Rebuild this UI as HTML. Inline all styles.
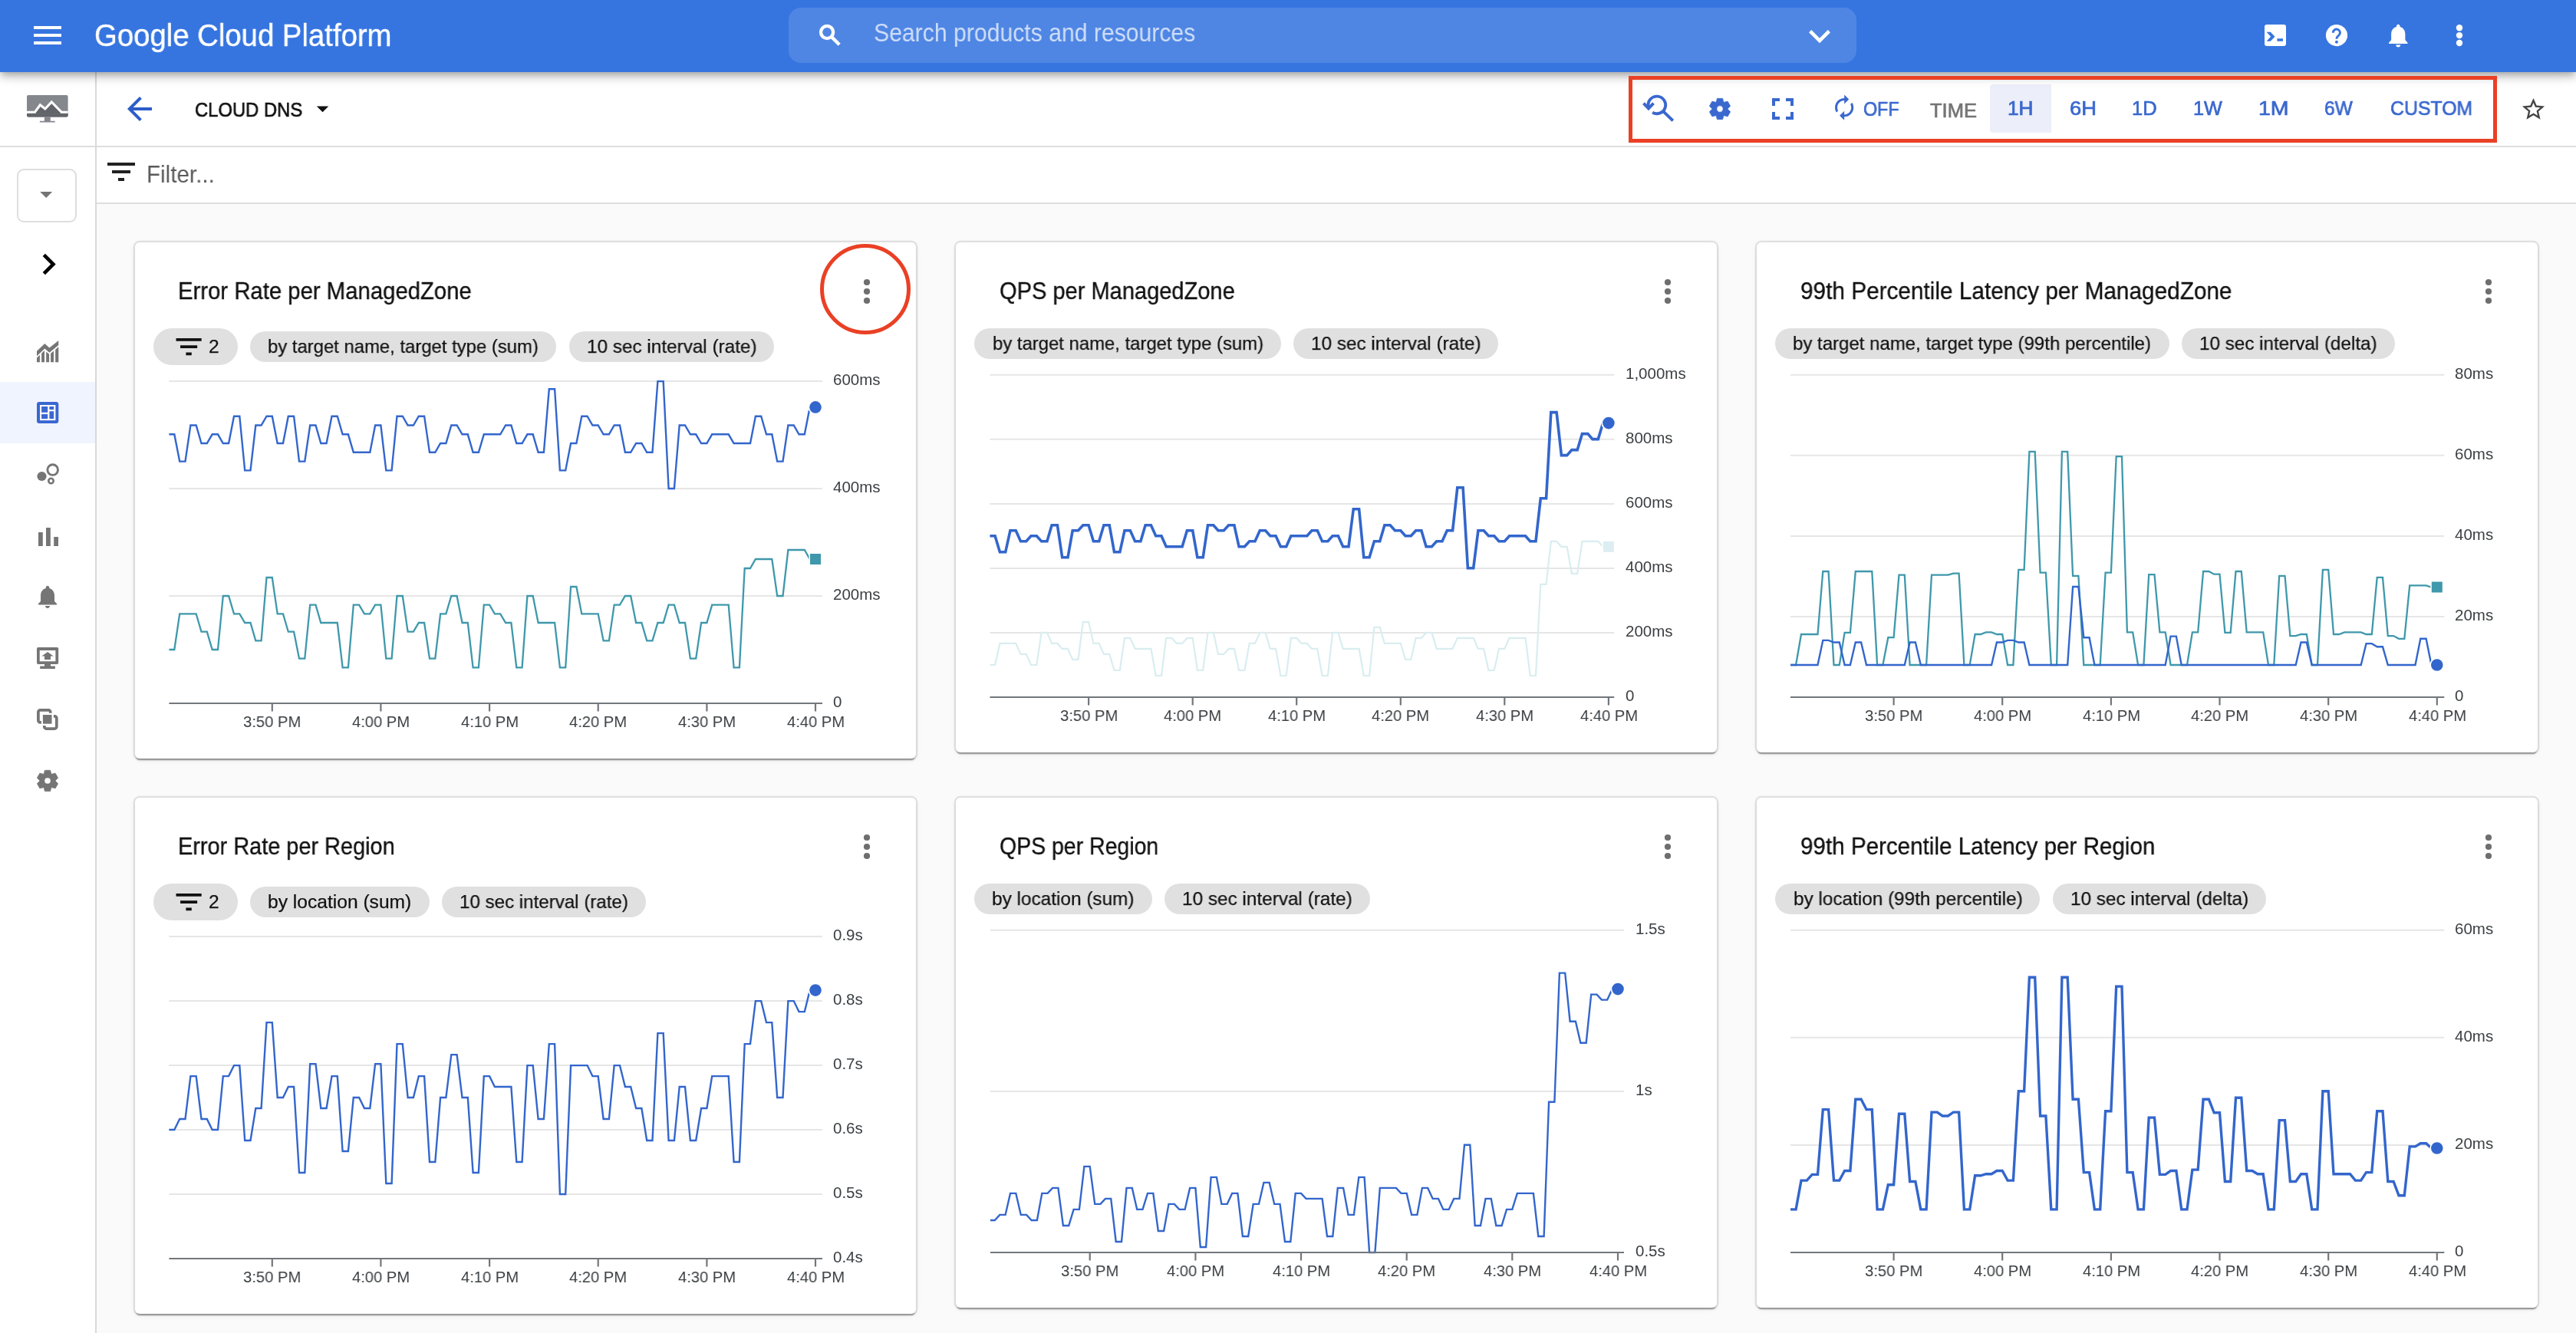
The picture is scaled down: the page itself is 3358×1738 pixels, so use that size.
<!DOCTYPE html>
<html><head><meta charset="utf-8"><title>Cloud DNS – Monitoring</title>
<style>
html,body{margin:0;padding:0}
body{width:3358px;height:1738px;overflow:hidden;background:#fafafa;font-family:"Liberation Sans",sans-serif;position:relative}
.t{position:absolute;white-space:nowrap;display:block;transform-origin:0 50%;will-change:transform}
.i{position:absolute;display:block;overflow:visible}
.b{position:absolute;box-sizing:border-box}
.card{position:absolute;background:#fff;border-radius:6px;box-shadow:0 0 0 2.3px rgba(0,0,0,.095),0 4px 2px -2px rgba(0,0,0,.22),0 3.5px 2px -1.5px rgba(0,0,0,.16),0 2px 7px 0 rgba(0,0,0,.07)}
.chip{position:absolute;background:#e0e0e0;border-radius:24px}
</style></head><body>

<div class="b" style="left:0;top:94px;width:126px;height:1644px;background:#fff"></div>
<div class="b" style="left:126px;top:94px;width:3232px;height:172px;background:#fff"></div>
<div class="b" style="left:0;top:190px;width:3358px;height:2px;background:#dedede"></div>
<div class="b" style="left:126px;top:264px;width:3232px;height:2px;background:#dedede"></div>
<div class="b" style="left:124.2px;top:94px;width:1.900px;height:1644px;background:#d9d9d9"></div>
<div class="b" style="left:0;top:0;width:3358px;height:94px;background:#3675e0;box-shadow:0 4px 8px -2px rgba(0,0,0,.2),0 8px 10px 0 rgba(0,0,0,.14),0 2px 20px 0 rgba(0,0,0,.12);z-index:5"></div>
<div style="position:absolute;left:0;top:0;width:3358px;height:94px;z-index:6">
<svg class="i" style="left:38.0px;top:22.0px" width="48" height="48" viewBox="0 0 24 24"><path d="M3 18h18v-2H3v2zm0-5h18v-2H3v2zm0-7v2h18V6H3z" fill="#fff" /></svg>
<span class="t" style="left:123.33px;top:21.6px;font-size:41.0px;line-height:49px;color:#fff;-webkit-text-stroke:0.4px #fff;transform:scaleX(0.9343);">Google Cloud Platform</span>
<div class="b" style="left:1028px;top:9.5px;width:1392px;height:72px;border-radius:16px;background:rgba(255,255,255,.125)"></div>
<svg class="i" style="left:1060px;top:24px" width="44" height="44" viewBox="1060 24 44 44"><circle cx="1078.1" cy="42" r="8.05" fill="none" stroke="#fff" stroke-width="4.3"/><path d="M1083.6 47.600L1094.2 58.200" stroke="#fff" stroke-width="4.400"/></svg>
<span class="t" style="left:1139.23px;top:23.4px;font-size:32.8px;line-height:39px;color:rgba(255,255,255,.72);transform:scaleX(0.9200);">Search products and resources</span>
<svg class="i" style="left:2344.0px;top:19.0px" width="56" height="56" viewBox="0 0 24 24"><path d="M7.41 8.59L12 13.17l4.59-4.58L18 10l-6 6-6-6 1.41-1.41z" fill="#fff" /></svg>
<svg class="i" style="left:2952px;top:32px" width="28" height="28" viewBox="0 0 28 28"><path fill="#fff" fill-rule="evenodd" d="M3 0h22a3 3 0 0 1 3 3v22a3 3 0 0 1-3 3H3a3 3 0 0 1-3-3V3a3 3 0 0 1 3-3zM2.6 9.7h5.2l5.7 6.1-5.7 6.0H2.6l5.5-6.0zM16.4 18.3h7.6v3.4h-7.6z"/></svg>
<svg class="i" style="left:3026px;top:26px" width="40" height="40" viewBox="3026 26 40 40"><circle cx="3046" cy="46.1" r="14.1" fill="#fff"/><path d="M3041.4 42.700a4.500 4.500 0 1 1 7.300 3.400c-1.600 1.300-2.800 2.300-2.800 4.700" fill="none" stroke="#3675e0" stroke-width="3"/><circle cx="3045.9" cy="54.800" r="1.950" fill="#3675e0"/></svg>
<svg class="i" style="left:3107.7px;top:28.0px" width="36.5" height="36.5" viewBox="0 0 24 24"><path d="M12 22c1.1 0 2-.9 2-2h-4c0 1.1.89 2 2 2zm6-6v-5c0-3.07-1.64-5.64-4.5-6.32V4c0-.83-.67-1.5-1.5-1.5s-1.5.67-1.5 1.5v.68C7.63 5.36 6 7.92 6 11v5l-2 2v1h16v-1l-2-2z" fill="#fff" /></svg>
<svg class="i" style="left:3200px;top:30px" width="12" height="32" viewBox="0 0 12 32"><circle cx="6" cy="6.2" r="4.2" fill="#fff"/><circle cx="6" cy="16.1" r="4.2" fill="#fff"/><circle cx="6" cy="26" r="4.2" fill="#fff"/></svg>
</div>
<svg class="i" style="left:158.3px;top:118.0px" width="48" height="48" viewBox="0 0 24 24"><path d="M20 11H7.83l5.59-5.59L12 4l-8 8 8 8 1.41-1.41L7.83 13H20v-2z" fill="#2b5dc9" /></svg>
<span class="t" style="left:253.61px;top:127.8px;font-size:25.42px;line-height:31px;color:#111;-webkit-text-stroke:0.7px #111;transform:scaleX(0.9368);">CLOUD DNS</span>
<svg class="i" style="left:401.5px;top:122.7px" width="37.2" height="37.2" viewBox="0 0 24 24"><path d="M7 10l5 5 5-5z" fill="#111" /></svg>
<div class="b" style="left:2123px;top:99px;width:1132px;height:86.5px;border:5px solid #ea4025;z-index:8"></div>
<div class="b" style="left:2594px;top:109.8px;width:80px;height:63.7px;background:#eceef9;border-radius:4px 0 0 4px"></div>
<svg class="i" style="left:2136px;top:118px" width="52" height="48" viewBox="2136 118 52 48">
<path d="M2148.8 139.2A11.3 11.3 0 1 1 2154.1 146.600" fill="none" stroke="#3a68ce" stroke-width="3.900"/>
<path d="M2167.6 144.600L2180.8 157.400" stroke="#3a68ce" stroke-width="4" fill="none"/>
<path d="M2142.5 134.600L2149 141.400L2155.5 134.600" stroke="#3a68ce" stroke-width="3.900" fill="none" stroke-linejoin="miter"/>
</svg>
<svg class="i" style="left:2222px;top:122px" width="40" height="40" viewBox="2222 122 40 40"><path d="M2246.91 132.95 L2245.56 128.25 L2238.44 128.25 L2237.09 132.95 L2236.62 133.22 L2231.87 132.05 L2228.32 138.21 L2231.70 141.73 L2231.70 142.27 L2228.32 145.79 L2231.87 151.95 L2236.62 150.78 L2237.09 151.05 L2238.44 155.75 L2245.56 155.75 L2246.91 151.05 L2247.38 150.78 L2252.13 151.95 L2255.68 145.79 L2252.30 142.27 L2252.30 141.73 L2255.68 138.21 L2252.13 132.05 L2247.38 133.22Z M2237.90 142.00a4.1 4.1 0 1 0 8.2 0a4.1 4.1 0 1 0 -8.2 0Z" fill="#3a68ce" fill-rule="evenodd" stroke="#3a68ce" stroke-width="0.6" stroke-linejoin="round"/></svg>
<svg class="i" style="left:2300.0px;top:117.9px" width="48" height="48" viewBox="0 0 24 24"><path d="M7 14H5v5h5v-2H7v-3zm-2-4h2V7h3V5H5v5zm12 7h-3v2h5v-5h-2v3zM14 5v2h3v3h2V5h-5z" fill="#3a68ce" /></svg>
<svg class="i" style="left:2385.8px;top:121.9px" width="36.3" height="36.3" viewBox="0 0 24 24"><path d="M12 6v3l4-4-4-4v3c-4.42 0-8 3.58-8 8 0 1.57.46 3.03 1.24 4.26L6.7 14.8c-.45-.83-.7-1.79-.7-2.8 0-3.31 2.69-6 6-6zm6.76 1.74L17.3 9.2c.44.84.7 1.79.7 2.8 0 3.31-2.69 6-6 6v-3l-4 4 4 4v-3c4.42 0 8-3.58 8-8 0-1.57-.46-3.03-1.24-4.26z" fill="#3a68ce" /></svg>
<span class="t" style="left:2429.25px;top:126.6px;font-size:25.21px;line-height:30px;color:#3a68ce;-webkit-text-stroke:0.7px #3a68ce;transform:scaleX(0.9259);">OFF</span>
<span class="t" style="left:2516.49px;top:129.4px;font-size:25.21px;line-height:30px;color:#757575;-webkit-text-stroke:0.7px #757575;transform:scaleX(1.0134);">TIME</span>
<span class="t" style="left:2617.23px;top:125.9px;font-size:25.21px;line-height:30px;color:#3a68ce;-webkit-text-stroke:0.7px #3a68ce;transform:scaleX(1.0413);">1H</span>
<span class="t" style="left:2697.83px;top:125.9px;font-size:25.21px;line-height:30px;color:#3a68ce;-webkit-text-stroke:0.7px #3a68ce;transform:scaleX(1.0843);">6H</span>
<span class="t" style="left:2778.78px;top:125.9px;font-size:25.21px;line-height:30px;color:#3a68ce;-webkit-text-stroke:0.7px #3a68ce;transform:scaleX(1.0131);">1D</span>
<span class="t" style="left:2858.73px;top:125.9px;font-size:25.21px;line-height:30px;color:#3a68ce;-webkit-text-stroke:0.7px #3a68ce;transform:scaleX(0.9889);">1W</span>
<span class="t" style="left:2944.36px;top:125.9px;font-size:25.21px;line-height:30px;color:#3a68ce;-webkit-text-stroke:0.7px #3a68ce;transform:scaleX(1.1320);">1M</span>
<span class="t" style="left:3030.28px;top:125.9px;font-size:25.21px;line-height:30px;color:#3a68ce;-webkit-text-stroke:0.7px #3a68ce;transform:scaleX(0.9718);">6W</span>
<span class="t" style="left:3115.56px;top:125.9px;font-size:25.21px;line-height:30px;color:#3a68ce;-webkit-text-stroke:0.7px #3a68ce;transform:scaleX(0.9850);">CUSTOM</span>
<svg class="i" style="left:3284.5px;top:125.3px" width="35" height="35" viewBox="0 0 24 24"><path d="M22 9.24l-7.19-.62L12 2 9.19 8.63 2 9.24l5.46 4.73L5.82 21 12 17.27 18.18 21l-1.63-7.03L22 9.24zM12 15.4l-3.76 2.27 1-4.28-3.32-2.88 4.38-.38L12 6.1l1.71 4.04 4.38.38-3.32 2.88 1 4.28L12 15.4z" fill="#444" /></svg>
<svg class="i" style="left:133.8px;top:200.0px" width="48" height="48" viewBox="0 0 24 24"><path d="M10 18h4v-2h-4v2zM3 6v2h18V6H3zm3 7h12v-2H6v2z" fill="#222" /></svg>
<span class="t" style="left:190.61px;top:209.2px;font-size:30.75px;line-height:37px;color:#5a5a5a;transform:scaleX(0.9618);">Filter...</span>
<svg class="i" style="left:35.2px;top:123.900px" width="53.600" height="36" viewBox="0 0 54 38" preserveAspectRatio="none">
<path d="M2 0h50a2 2 0 0 1 2 2v26a2 2 0 0 1-2 2H2a2 2 0 0 1-2-2V2a2 2 0 0 1 2-2z" fill="#84878c"/>
<path d="M0 26h54v2a2 2 0 0 1-2 2H2a2 2 0 0 1-2-2z" fill="#61656a"/>
<path d="M0 24h10l7.5-10.5 6.5 5.5 8.5-9 13 14h8.5v2H0z" fill="#61656a"/>
<path d="M0 23.500h10.500l7-10 6.500 5.500 8.500-9.500 13 14H54" stroke="#fff" stroke-width="3.2" fill="none"/>
<path d="M23 30h8v5.5h6V37.5H17V35.5h6z" fill="#84878c"/>
</svg>
<div class="b" style="left:22px;top:220px;width:77.5px;height:69.500px;border:2px solid #dedede;border-radius:9px;background:#fff"></div>
<svg class="i" style="left:40.8px;top:234.0px" width="38.4" height="38.4" viewBox="0 0 24 24"><path d="M7 10l5 5 5-5z" fill="#757575" /></svg>
<svg class="i" style="left:36.3px;top:316.6px" width="55" height="55" viewBox="0 0 24 24"><path d="M10 6L8.59 7.41 13.17 12l-4.58 4.59L10 18l6-6z" fill="#000" /></svg>
<div class="b" style="left:0;top:498px;width:124.2px;height:80px;background:#f0f4fe"></div>
<svg class="i" style="left:47.9px;top:443.900px" width="28.3" height="28.3" viewBox="0 0 28.3 28.3">
<path d="M0 13.8L10.3 4.1 16.4 9.5 28.3 0V6L16.4 15.8 10.3 10.4 0 20.2Z" fill="#757575"/>
<path d="M0 28.2V22.5L3.9 18.8V28.2ZM6.1 28.2V16.7L10 13.0V28.2ZM12.2 28.2V14.4L16.1 17.8V28.2ZM18.1 28.2V16.7L22 13.5V28.2ZM24.2 28.2V11.7L28.3 8.3V28.2Z" fill="#757575"/>
</svg>
<svg class="i" style="left:47.9px;top:523.900px" width="28.3" height="28" viewBox="0 0 28.3 28">
<rect x="0" y="0" width="28.3" height="28" rx="3.2" fill="#3a67d1"/>
<rect x="4" y="4" width="20.4" height="20.1" fill="#fff"/>
<path d="M6.1 6h8.1v7.800H6.100zM6.100 16.100h8.100v6H6.100zM16.400 6h5.800v3.900h-5.800zM16.400 12.200h5.800v9.900h-5.800z" fill="#3a67d1"/>
</svg>
<svg class="i" style="left:48px;top:604px" width="30" height="28" viewBox="0 0 30 28">
<circle cx="6.5" cy="17" r="6.1" fill="#757575"/>
<circle cx="20.7" cy="8.600" r="6.800" fill="none" stroke="#757575" stroke-width="2.900"/>
<circle cx="18.5" cy="23" r="3.2" fill="none" stroke="#757575" stroke-width="2.600"/>
</svg>
<svg class="i" style="left:50px;top:688px" width="26" height="24" viewBox="0 0 26 24">
<path d="M0 6h5.8v18H0zM10 0h5.8v24H10zM20.2 12H26v12h-5.8z" fill="#757575"/></svg>
<svg class="i" style="left:44.1px;top:760.2px" width="36" height="36" viewBox="0 0 24 24"><path d="M12 22c1.1 0 2-.9 2-2h-4c0 1.1.89 2 2 2zm6-6v-5c0-3.07-1.64-5.64-4.5-6.32V4c0-.83-.67-1.5-1.5-1.5s-1.5.67-1.5 1.5v.68C7.63 5.36 6 7.92 6 11v5l-2 2v1h16v-1l-2-2z" fill="#757575" /></svg>
<svg class="i" style="left:48px;top:843.900px" width="28.2" height="28" viewBox="0 0 28.2 28">
<path fill-rule="evenodd" d="M1.800 0h24.600a1.800 1.800 0 0 1 1.800 1.800v18.400a1.800 1.800 0 0 1-1.800 1.800H18v2.400h5.900V28H4.200v-3.600H10V22H1.800a1.800 1.800 0 0 1-1.800-1.800V1.800A1.800 1.800 0 0 1 1.800 0zM3.750 4v14.300h20.650V4zM14.100 6.100l7.700 5.400H18v4.400h-8v-4.400H6.300z" fill="#757575"/></svg>
<svg class="i" style="left:48.3px;top:924.100px" width="28" height="28" viewBox="0 0 28 28">
<path d="M17.700 5.700V4.400a2.5 2.5 0 0 0-2.5-2.500H4.400a2.500 2.500 0 0 0-2.500 2.500v10.900a2.500 2.500 0 0 0 2.500 2.500h1.500M21.900 9.900h1.400a2.500 2.500 0 0 1 2.500 2.500V23.500a2.500 2.500 0 0 1-2.500 2.500H12.300a2.500 2.500 0 0 1-2.500-2.500v-1.500" fill="none" stroke="#757575" stroke-width="3.750"/>
<rect x="7.900" y="8" width="11.600" height="11.700" fill="#757575"/></svg>
<svg class="i" style="left:42px;top:998px" width="40" height="40" viewBox="42 998 40 40"><path d="M66.91 1008.95 L65.56 1004.25 L58.44 1004.25 L57.09 1008.95 L56.62 1009.22 L51.87 1008.05 L48.32 1014.21 L51.70 1017.73 L51.70 1018.27 L48.32 1021.79 L51.87 1027.95 L56.62 1026.78 L57.09 1027.05 L58.44 1031.75 L65.56 1031.75 L66.91 1027.05 L67.38 1026.78 L72.13 1027.95 L75.68 1021.79 L72.30 1018.27 L72.30 1017.73 L75.68 1014.21 L72.13 1008.05 L67.38 1009.22Z M57.90 1018.00a4.1 4.1 0 1 0 8.2 0a4.1 4.1 0 1 0 -8.2 0Z" fill="#757575" fill-rule="evenodd" stroke="#757575" stroke-width="0.6" stroke-linejoin="round"/></svg>
<div class="card" style="left:176px;top:316px;width:1018px;height:673px"></div>
<span class="t" style="left:231.74px;top:360.8px;font-size:30.75px;line-height:37px;color:#111;-webkit-text-stroke:0.35px #111;transform:scaleX(0.9530);">Error Rate per ManagedZone</span>
<svg class="i" style="left:1124.0px;top:364.0px" width="12" height="32" viewBox="0 0 12 32"><circle cx="6" cy="4" r="4.100" fill="#6e6e6e"/><circle cx="6" cy="16" r="4.100" fill="#6e6e6e"/><circle cx="6" cy="28" r="4.100" fill="#6e6e6e"/></svg>
<div class="chip" style="left:200px;top:428px;width:110px;height:48px"></div>
<svg class="i" style="left:223.7px;top:429.9px" width="44.2" height="44.2" viewBox="0 0 24 24"><path d="M10 18h4v-2h-4v2zM3 6v2h18V6H3zm3 7h12v-2H6v2z" fill="#111" /></svg>
<span class="t" style="left:271.77px;top:437.3px;font-size:24.6px;line-height:30px;color:#111;-webkit-text-stroke:0.25px #111;">2</span>
<div class="chip" style="left:326.0px;top:432.0px;width:399.4px;height:40.0px"></div>
<span class="t" style="left:349.35px;top:436.8px;font-size:24.6px;line-height:30px;color:#111;-webkit-text-stroke:0.25px #111;transform:scaleX(0.9703);">by target name, target type (sum)</span>
<div class="chip" style="left:741.7px;top:432.0px;width:267.8px;height:40.0px"></div>
<span class="t" style="left:764.78px;top:436.8px;font-size:24.6px;line-height:30px;color:#111;-webkit-text-stroke:0.25px #111;transform:scaleX(0.9883);">10 sec interval (rate)</span>
<svg class="i" style="left:0;top:0" width="3358" height="1738" viewBox="0 0 3358 1738">
<defs><clipPath id="cp1"><rect x="220.4" y="491.1" width="881.6" height="429.9"/></clipPath></defs>
<path d="M220.4 497.1H1072" stroke="#e6e6e6" stroke-width="2"/>
<path d="M220.4 637H1072" stroke="#e6e6e6" stroke-width="2"/>
<path d="M220.4 777H1072" stroke="#e6e6e6" stroke-width="2"/>
<polyline clip-path="url(#cp1)" points="220.0,566.3 227.3,566.3 234.2,601.6 241.5,601.6 248.4,554.5 255.7,554.5 262.5,578.0 269.8,578.0 276.7,566.3 284.0,566.3 290.8,578.0 298.1,578.0 305.0,542.7 312.3,542.7 319.2,613.4 326.5,613.4 333.3,554.5 340.6,554.5 347.5,542.7 354.8,542.7 361.7,578.0 369.0,578.0 375.8,542.7 383.1,542.7 390.0,601.6 397.3,601.6 404.2,554.5 411.5,554.5 418.3,578.0 425.6,578.0 432.5,542.7 439.8,542.7 446.6,566.3 453.9,566.3 460.8,589.8 468.1,589.8 475.0,589.8 482.3,589.8 489.1,554.5 496.4,554.5 503.3,613.4 510.6,613.4 517.5,542.7 524.8,542.7 531.6,554.5 538.9,554.5 545.8,542.7 553.1,542.7 560.0,589.8 567.3,589.8 574.1,578.0 581.4,578.0 588.3,554.5 595.6,554.5 602.5,566.3 609.8,566.3 616.6,589.8 623.9,589.8 630.8,566.3 638.1,566.3 644.9,566.3 652.2,566.3 659.1,554.5 666.4,554.5 673.3,578.0 680.6,578.0 687.4,566.3 694.7,566.3 701.6,589.8 708.9,589.8 715.8,507.3 723.1,507.3 729.9,613.4 737.2,613.4 744.1,578.0 751.4,578.0 758.3,542.7 765.6,542.7 772.4,554.5 779.7,554.5 786.6,566.3 793.9,566.3 800.7,554.5 808.0,554.5 814.9,589.8 822.2,589.8 829.1,578.0 836.4,578.0 843.2,589.8 850.5,589.8 857.4,497.1 864.7,497.1 871.6,637.0 878.9,637.0 885.7,554.5 893.0,554.5 899.9,566.3 907.2,566.3 914.1,578.0 921.4,578.0 928.2,566.3 935.5,566.3 942.4,566.3 949.7,566.3 956.6,578.0 963.9,578.0 970.7,578.0 978.0,578.0 984.9,542.7 992.2,542.7 999.0,566.3 1006.3,566.3 1013.2,601.6 1020.5,601.6 1027.4,554.5 1034.7,554.5 1041.5,566.3 1048.8,566.3 1055.7,530.9 1063.0,530.9" fill="none" stroke="#3366cc" stroke-width="2.4" stroke-linejoin="miter"/>
<polyline clip-path="url(#cp1)" points="220.0,847.0 227.3,847.0 234.2,800.4 241.5,800.4 248.4,800.4 255.7,800.4 262.5,823.7 269.8,823.7 276.7,847.0 284.0,847.0 290.8,777.0 298.1,777.0 305.0,800.4 312.3,800.4 319.2,812.0 326.5,812.0 333.3,835.4 340.6,835.4 347.5,753.0 354.8,753.0 361.7,800.4 369.0,800.4 375.8,823.7 383.1,823.7 390.0,858.7 397.3,858.7 404.2,788.7 411.5,788.7 418.3,812.0 425.6,812.0 432.5,812.0 439.8,812.0 446.6,870.3 453.9,870.3 460.8,788.7 468.1,788.7 475.0,800.4 482.3,800.4 489.1,788.7 496.4,788.7 503.3,858.7 510.6,858.7 517.5,777.0 524.8,777.0 531.6,823.7 538.9,823.7 545.8,812.0 553.1,812.0 560.0,858.7 567.3,858.7 574.1,800.4 581.4,800.4 588.3,777.0 595.6,777.0 602.5,812.0 609.8,812.0 616.6,870.3 623.9,870.3 630.8,788.7 638.1,788.7 644.9,800.4 652.2,800.4 659.1,812.0 666.4,812.0 673.3,870.3 680.6,870.3 687.4,777.0 694.7,777.0 701.6,812.0 708.9,812.0 715.8,812.0 723.1,812.0 729.9,870.3 737.2,870.3 744.1,765.0 751.4,765.0 758.3,800.4 765.6,800.4 772.4,800.4 779.7,800.4 786.6,835.4 793.9,835.4 800.7,788.7 808.0,788.7 814.9,777.0 822.2,777.0 829.1,812.0 836.4,812.0 843.2,835.4 850.5,835.4 857.4,812.0 864.7,812.0 871.6,788.7 878.9,788.7 885.7,812.0 893.0,812.0 899.9,858.7 907.2,858.7 914.1,812.0 921.4,812.0 928.2,788.7 935.5,788.7 942.4,788.7 949.7,788.7 956.6,870.3 963.9,870.3 970.7,741.0 978.0,741.0 984.9,729.0 992.2,729.0 999.0,729.0 1006.3,729.0 1013.2,777.0 1020.5,777.0 1027.4,717.0 1034.7,717.0 1041.5,717.0 1048.8,717.0 1055.7,729.0 1063.0,729.0" fill="none" stroke="#3f98ab" stroke-width="2.3" stroke-linejoin="miter"/>
<circle cx="1063" cy="530.9" r="9.5" fill="#fff"/><circle cx="1063" cy="530.9" r="7.800" fill="#3366cc"/>
<rect x="1054.5" y="720.5" width="17" height="17" fill="#fff"/><rect x="1056" y="722.0" width="14" height="14" fill="#3f98ab"/>
<path d="M220.4 917H1072" stroke="#72777c" stroke-width="2.2"/>
<path d="M354.8 917v10.5" stroke="#72777c" stroke-width="2.2"/>
<path d="M496.4 917v10.5" stroke="#72777c" stroke-width="2.2"/>
<path d="M638.1 917v10.5" stroke="#72777c" stroke-width="2.2"/>
<path d="M779.7 917v10.5" stroke="#72777c" stroke-width="2.2"/>
<path d="M921.4 917v10.5" stroke="#72777c" stroke-width="2.2"/>
<path d="M1063.0 917v10.5" stroke="#72777c" stroke-width="2.2"/>
</svg>
<span class="t" style="left:317.24px;top:928.4px;font-size:20.5px;line-height:25px;color:#3c4043;transform:scaleX(0.9874);">3:50 PM</span>
<span class="t" style="left:459.14px;top:928.4px;font-size:20.5px;line-height:25px;color:#3c4043;transform:scaleX(0.9840);">4:00 PM</span>
<span class="t" style="left:600.78px;top:928.4px;font-size:20.5px;line-height:25px;color:#3c4043;transform:scaleX(0.9840);">4:10 PM</span>
<span class="t" style="left:742.42px;top:928.4px;font-size:20.5px;line-height:25px;color:#3c4043;transform:scaleX(0.9840);">4:20 PM</span>
<span class="t" style="left:884.06px;top:928.4px;font-size:20.5px;line-height:25px;color:#3c4043;transform:scaleX(0.9840);">4:30 PM</span>
<span class="t" style="left:1025.70px;top:928.4px;font-size:20.5px;line-height:25px;color:#3c4043;transform:scaleX(0.9840);">4:40 PM</span>
<span class="t" style="left:1085.60px;top:482.4px;font-size:20.5px;line-height:25px;color:#3c4043;">600ms</span>
<span class="t" style="left:1085.60px;top:622.3px;font-size:20.5px;line-height:25px;color:#3c4043;">400ms</span>
<span class="t" style="left:1085.60px;top:762.3px;font-size:20.5px;line-height:25px;color:#3c4043;">200ms</span>
<span class="t" style="left:1085.60px;top:902.3px;font-size:20.5px;line-height:25px;color:#3c4043;">0</span>
<div class="b" style="left:1068.8px;top:317.800px;width:118.3px;height:118.3px;border:5.5px solid #ea4025;border-radius:50%"></div>
<div class="card" style="left:1246px;top:316px;width:992px;height:665px"></div>
<span class="t" style="left:1302.69px;top:360.8px;font-size:30.75px;line-height:37px;color:#111;-webkit-text-stroke:0.35px #111;transform:scaleX(0.9444);">QPS per ManagedZone</span>
<svg class="i" style="left:2167.5px;top:364.0px" width="12" height="32" viewBox="0 0 12 32"><circle cx="6" cy="4" r="4.100" fill="#6e6e6e"/><circle cx="6" cy="16" r="4.100" fill="#6e6e6e"/><circle cx="6" cy="28" r="4.100" fill="#6e6e6e"/></svg>
<div class="chip" style="left:1270.4px;top:427.6px;width:399.6px;height:40.4px"></div>
<span class="t" style="left:1293.75px;top:432.8px;font-size:24.6px;line-height:30px;color:#111;-webkit-text-stroke:0.25px #111;transform:scaleX(0.9708);">by target name, target type (sum)</span>
<div class="chip" style="left:1685.7px;top:427.6px;width:267.8px;height:40.4px"></div>
<span class="t" style="left:1708.78px;top:432.8px;font-size:24.6px;line-height:30px;color:#111;-webkit-text-stroke:0.25px #111;transform:scaleX(0.9883);">10 sec interval (rate)</span>
<svg class="i" style="left:0;top:0" width="3358" height="1738" viewBox="0 0 3358 1738">
<defs><clipPath id="cp2"><rect x="1290.4" y="482.8" width="843.7999999999997" height="430.2"/></clipPath></defs>
<path d="M1290.4 488.8H2104.2" stroke="#e6e6e6" stroke-width="2"/>
<path d="M1290.4 572.84H2104.2" stroke="#e6e6e6" stroke-width="2"/>
<path d="M1290.4 656.88H2104.2" stroke="#e6e6e6" stroke-width="2"/>
<path d="M1290.4 740.92H2104.2" stroke="#e6e6e6" stroke-width="2"/>
<path d="M1290.4 824.96H2104.2" stroke="#e6e6e6" stroke-width="2"/>
<polyline clip-path="url(#cp2)" points="1289.8,867.0 1297.1,867.0 1303.4,838.9 1310.7,838.9 1316.9,838.9 1324.2,838.9 1330.5,852.9 1337.8,852.9 1344.0,867.0 1351.3,867.0 1357.6,824.9 1364.9,824.9 1371.1,838.9 1378.4,838.9 1384.7,845.9 1392.0,845.9 1398.2,859.9 1405.5,859.9 1411.8,810.9 1419.1,810.9 1425.4,838.9 1432.7,838.9 1438.9,852.9 1446.2,852.9 1452.5,874.0 1459.8,874.0 1466.0,831.9 1473.3,831.9 1479.6,845.9 1486.9,845.9 1493.1,845.9 1500.4,845.9 1506.7,881.0 1514.0,881.0 1520.2,831.9 1527.5,831.9 1533.8,838.9 1541.1,838.9 1547.4,831.9 1554.7,831.9 1560.9,874.0 1568.2,874.0 1574.5,824.9 1581.8,824.9 1588.0,852.9 1595.3,852.9 1601.6,845.9 1608.9,845.9 1615.1,874.0 1622.4,874.0 1628.7,838.9 1636.0,838.9 1642.3,824.9 1649.6,824.9 1655.8,845.9 1663.1,845.9 1669.4,881.0 1676.7,881.0 1682.9,831.9 1690.2,831.9 1696.5,838.9 1703.8,838.9 1710.0,845.9 1717.3,845.9 1723.6,881.0 1730.9,881.0 1737.1,824.9 1744.4,824.9 1750.7,845.9 1758.0,845.9 1764.3,845.9 1771.6,845.9 1777.8,881.0 1785.1,881.0 1791.4,817.9 1798.7,817.9 1804.9,838.9 1812.2,838.9 1818.5,838.9 1825.8,838.9 1832.0,859.9 1839.3,859.9 1845.6,831.9 1852.9,831.9 1859.1,824.9 1866.4,824.9 1872.7,845.9 1880.0,845.9 1886.3,845.9 1893.6,845.9 1899.8,831.9 1907.1,831.9 1913.4,831.9 1920.7,831.9 1926.9,845.9 1934.2,845.9 1940.5,874.0 1947.8,874.0 1954.0,845.9 1961.3,845.9 1967.6,831.9 1974.9,831.9 1981.2,831.9 1988.5,831.9 1994.7,881.0 2002.0,881.0 2008.3,761.8 2015.6,761.8 2021.8,705.8 2029.1,705.8 2035.4,712.8 2042.7,712.8 2048.9,747.8 2056.2,747.8 2062.5,705.8 2069.8,705.8 2076.0,705.8 2083.3,705.8 2089.6,712.8 2096.9,712.8" fill="none" stroke="#d9edf0" stroke-width="2.2" stroke-linejoin="miter"/>
<polyline clip-path="url(#cp2)" points="1289.8,698.8 1297.1,698.8 1303.4,719.8 1310.7,719.8 1316.9,691.8 1324.2,691.8 1330.5,705.8 1337.8,705.8 1344.0,698.8 1351.3,698.8 1357.6,705.8 1364.9,705.8 1371.1,684.7 1378.4,684.7 1384.7,726.8 1392.0,726.8 1398.2,691.8 1405.5,691.8 1411.8,684.7 1419.1,684.7 1425.4,705.8 1432.7,705.8 1438.9,684.7 1446.2,684.7 1452.5,719.8 1459.8,719.8 1466.0,691.8 1473.3,691.8 1479.6,705.8 1486.9,705.8 1493.1,684.7 1500.4,684.7 1506.7,698.8 1514.0,698.8 1520.2,712.8 1527.5,712.8 1533.8,712.8 1541.1,712.8 1547.4,691.8 1554.7,691.8 1560.9,726.8 1568.2,726.8 1574.5,684.7 1581.8,684.7 1588.0,691.8 1595.3,691.8 1601.6,684.7 1608.9,684.7 1615.1,712.8 1622.4,712.8 1628.7,705.8 1636.0,705.8 1642.3,691.8 1649.6,691.8 1655.8,698.8 1663.1,698.8 1669.4,712.8 1676.7,712.8 1682.9,698.8 1690.2,698.8 1696.5,698.8 1703.8,698.8 1710.0,691.8 1717.3,691.8 1723.6,705.8 1730.9,705.8 1737.1,698.8 1744.4,698.8 1750.7,712.8 1758.0,712.8 1764.3,663.7 1771.6,663.7 1777.8,726.8 1785.1,726.8 1791.4,705.8 1798.7,705.8 1804.9,684.7 1812.2,684.7 1818.5,691.8 1825.8,691.8 1832.0,698.8 1839.3,698.8 1845.6,691.8 1852.9,691.8 1859.1,712.8 1866.4,712.8 1872.7,705.8 1880.0,705.8 1886.3,691.8 1893.6,691.8 1899.8,635.7 1907.1,635.7 1913.4,740.8 1920.7,740.8 1926.9,691.8 1934.2,691.8 1940.5,698.8 1947.8,698.8 1954.0,705.8 1961.3,705.8 1967.6,698.8 1974.9,698.8 1981.2,698.8 1988.5,698.8 1994.7,705.8 2002.0,705.8 2008.3,649.7 2015.6,649.7 2021.8,537.6 2029.1,537.6 2035.4,593.6 2042.7,593.6 2048.9,586.6 2056.2,586.6 2062.5,565.6 2069.8,565.6 2076.0,572.6 2083.3,572.6 2089.6,551.6 2096.9,551.6" fill="none" stroke="#3366cc" stroke-width="3.6" stroke-linejoin="miter"/>
<rect x="2088.4" y="704.3" width="17" height="17" fill="#fff"/><rect x="2089.9" y="705.8" width="14" height="14" fill="#dceef1"/>
<circle cx="2096.9" cy="551.6" r="9.5" fill="#fff"/><circle cx="2096.9" cy="551.6" r="7.800" fill="#3366cc"/>
<path d="M1290.4 909H2104.2" stroke="#72777c" stroke-width="2.2"/>
<path d="M1419.1 909v10.5" stroke="#72777c" stroke-width="2.2"/>
<path d="M1554.7 909v10.5" stroke="#72777c" stroke-width="2.2"/>
<path d="M1690.2 909v10.5" stroke="#72777c" stroke-width="2.2"/>
<path d="M1825.8 909v10.5" stroke="#72777c" stroke-width="2.2"/>
<path d="M1961.3 909v10.5" stroke="#72777c" stroke-width="2.2"/>
<path d="M2096.9 909v10.5" stroke="#72777c" stroke-width="2.2"/>
</svg>
<span class="t" style="left:1381.54px;top:920.4px;font-size:20.5px;line-height:25px;color:#3c4043;transform:scaleX(0.9874);">3:50 PM</span>
<span class="t" style="left:1517.36px;top:920.4px;font-size:20.5px;line-height:25px;color:#3c4043;transform:scaleX(0.9840);">4:00 PM</span>
<span class="t" style="left:1652.92px;top:920.4px;font-size:20.5px;line-height:25px;color:#3c4043;transform:scaleX(0.9840);">4:10 PM</span>
<span class="t" style="left:1788.48px;top:920.4px;font-size:20.5px;line-height:25px;color:#3c4043;transform:scaleX(0.9840);">4:20 PM</span>
<span class="t" style="left:1924.04px;top:920.4px;font-size:20.5px;line-height:25px;color:#3c4043;transform:scaleX(0.9840);">4:30 PM</span>
<span class="t" style="left:2059.60px;top:920.4px;font-size:20.5px;line-height:25px;color:#3c4043;transform:scaleX(0.9840);">4:40 PM</span>
<span class="t" style="left:2119.00px;top:474.1px;font-size:20.5px;line-height:25px;color:#3c4043;">1,000ms</span>
<span class="t" style="left:2119.00px;top:558.1px;font-size:20.5px;line-height:25px;color:#3c4043;">800ms</span>
<span class="t" style="left:2119.00px;top:642.2px;font-size:20.5px;line-height:25px;color:#3c4043;">600ms</span>
<span class="t" style="left:2119.00px;top:726.2px;font-size:20.5px;line-height:25px;color:#3c4043;">400ms</span>
<span class="t" style="left:2119.00px;top:810.3px;font-size:20.5px;line-height:25px;color:#3c4043;">200ms</span>
<span class="t" style="left:2119.00px;top:894.3px;font-size:20.5px;line-height:25px;color:#3c4043;">0</span>
<div class="card" style="left:2290px;top:316px;width:1018px;height:665px"></div>
<span class="t" style="left:2347.16px;top:360.8px;font-size:30.75px;line-height:37px;color:#111;-webkit-text-stroke:0.35px #111;transform:scaleX(0.9678);">99th Percentile Latency per ManagedZone</span>
<svg class="i" style="left:3238.0px;top:364.0px" width="12" height="32" viewBox="0 0 12 32"><circle cx="6" cy="4" r="4.100" fill="#6e6e6e"/><circle cx="6" cy="16" r="4.100" fill="#6e6e6e"/><circle cx="6" cy="28" r="4.100" fill="#6e6e6e"/></svg>
<div class="chip" style="left:2314.0px;top:427.6px;width:513.6px;height:40.4px"></div>
<span class="t" style="left:2337.34px;top:432.8px;font-size:24.6px;line-height:30px;color:#111;-webkit-text-stroke:0.25px #111;transform:scaleX(0.9760);">by target name, target type (99th percentile)</span>
<div class="chip" style="left:2843.8px;top:427.6px;width:277.8px;height:40.4px"></div>
<span class="t" style="left:2866.88px;top:432.8px;font-size:24.6px;line-height:30px;color:#111;-webkit-text-stroke:0.25px #111;transform:scaleX(0.9848);">10 sec interval (delta)</span>
<svg class="i" style="left:0;top:0" width="3358" height="1738" viewBox="0 0 3358 1738">
<defs><clipPath id="cp3"><rect x="2334" y="482.8" width="882.3000000000002" height="430.2"/></clipPath></defs>
<path d="M2334 488.8H3186.3" stroke="#e6e6e6" stroke-width="2"/>
<path d="M2334 593.85H3186.3" stroke="#e6e6e6" stroke-width="2"/>
<path d="M2334 698.9H3186.3" stroke="#e6e6e6" stroke-width="2"/>
<path d="M2334 803.95H3186.3" stroke="#e6e6e6" stroke-width="2"/>
<polyline clip-path="url(#cp3)" points="2333.8,867.0 2341.1,867.0 2348.0,827.0 2355.3,827.0 2362.2,827.0 2369.5,827.0 2376.3,745.0 2383.6,745.0 2390.5,867.0 2397.8,867.0 2404.6,824.9 2411.9,824.9 2418.8,745.0 2426.1,745.0 2433.0,745.0 2440.3,745.0 2447.1,867.0 2454.4,867.0 2461.3,831.2 2468.6,831.2 2475.5,749.7 2482.8,749.7 2489.6,867.0 2496.9,867.0 2503.8,867.0 2511.1,867.0 2518.0,749.7 2525.3,749.7 2532.1,749.7 2539.4,749.7 2546.3,747.6 2553.6,747.6 2560.4,867.0 2567.7,867.0 2574.6,827.0 2581.9,827.0 2588.8,824.4 2596.1,824.4 2602.9,827.0 2610.2,827.0 2617.1,867.0 2624.4,867.0 2631.3,742.9 2638.6,742.9 2645.4,588.9 2652.7,588.9 2659.6,746.6 2666.9,746.6 2673.8,867.0 2681.1,867.0 2687.9,588.9 2695.2,588.9 2702.1,750.8 2709.4,750.8 2716.3,867.0 2723.6,867.0 2730.4,867.0 2737.7,867.0 2744.6,746.6 2751.9,746.6 2758.7,595.2 2766.0,595.2 2772.9,824.4 2780.2,824.4 2787.1,867.0 2794.4,867.0 2801.2,749.2 2808.5,749.2 2815.4,824.4 2822.7,824.4 2829.6,867.0 2836.9,867.0 2843.7,867.0 2851.0,867.0 2857.9,824.4 2865.2,824.4 2872.1,745.0 2879.4,745.0 2886.2,748.7 2893.5,748.7 2900.4,824.9 2907.7,824.9 2914.5,745.0 2921.8,745.0 2928.7,824.4 2936.0,824.4 2942.9,824.4 2950.2,824.4 2957.0,867.0 2964.3,867.0 2971.2,750.8 2978.5,750.8 2985.4,829.1 2992.7,829.1 2999.5,827.0 3006.8,827.0 3013.7,867.0 3021.0,867.0 3027.9,742.9 3035.2,742.9 3042.0,827.0 3049.3,827.0 3056.2,824.4 3063.5,824.4 3070.4,824.4 3077.7,824.4 3084.5,827.0 3091.8,827.0 3098.7,752.9 3106.0,752.9 3112.8,829.1 3120.1,829.1 3127.0,832.8 3134.3,832.8 3141.2,763.4 3148.5,763.4 3155.3,763.4 3162.6,763.4 3169.5,765.5 3176.8,765.5" fill="none" stroke="#3f98ab" stroke-width="2.3" stroke-linejoin="miter"/>
<polyline clip-path="url(#cp3)" points="2333.8,867.0 2341.1,867.0 2348.0,867.0 2355.3,867.0 2362.2,867.0 2369.5,867.0 2376.3,834.9 2383.6,834.9 2390.5,837.5 2397.8,837.5 2404.6,867.0 2411.9,867.0 2418.8,837.5 2426.1,837.5 2433.0,867.0 2440.3,867.0 2447.1,867.0 2454.4,867.0 2461.3,867.0 2468.6,867.0 2475.5,867.0 2482.8,867.0 2489.6,837.5 2496.9,837.5 2503.8,867.0 2511.1,867.0 2518.0,867.0 2525.3,867.0 2532.1,867.0 2539.4,867.0 2546.3,867.0 2553.6,867.0 2560.4,867.0 2567.7,867.0 2574.6,867.0 2581.9,867.0 2588.8,867.0 2596.1,867.0 2602.9,837.5 2610.2,837.5 2617.1,834.9 2624.4,834.9 2631.3,837.5 2638.6,837.5 2645.4,867.0 2652.7,867.0 2659.6,867.0 2666.9,867.0 2673.8,867.0 2681.1,867.0 2687.9,867.0 2695.2,867.0 2702.1,765.0 2709.4,765.0 2716.3,831.2 2723.6,831.2 2730.4,867.0 2737.7,867.0 2744.6,867.0 2751.9,867.0 2758.7,867.0 2766.0,867.0 2772.9,867.0 2780.2,867.0 2787.1,867.0 2794.4,867.0 2801.2,867.0 2808.5,867.0 2815.4,867.0 2822.7,867.0 2829.6,829.6 2836.9,829.6 2843.7,867.0 2851.0,867.0 2857.9,867.0 2865.2,867.0 2872.1,867.0 2879.4,867.0 2886.2,867.0 2893.5,867.0 2900.4,867.0 2907.7,867.0 2914.5,867.0 2921.8,867.0 2928.7,867.0 2936.0,867.0 2942.9,867.0 2950.2,867.0 2957.0,867.0 2964.3,867.0 2971.2,867.0 2978.5,867.0 2985.4,867.0 2992.7,867.0 2999.5,837.5 3006.8,837.5 3013.7,867.0 3021.0,867.0 3027.9,867.0 3035.2,867.0 3042.0,867.0 3049.3,867.0 3056.2,867.0 3063.5,867.0 3070.4,867.0 3077.7,867.0 3084.5,839.1 3091.8,839.1 3098.7,843.3 3106.0,843.3 3112.8,867.0 3120.1,867.0 3127.0,867.0 3134.3,867.0 3141.2,867.0 3148.5,867.0 3155.3,832.8 3162.6,832.8 3169.5,867.0 3176.8,867.0" fill="none" stroke="#3366cc" stroke-width="2.4" stroke-linejoin="miter"/>
<rect x="3168.3" y="757.0" width="17" height="17" fill="#fff"/><rect x="3169.8" y="758.5" width="14" height="14" fill="#3f98ab"/>
<circle cx="3176.8" cy="867.0" r="9.5" fill="#fff"/><circle cx="3176.8" cy="867.0" r="7.800" fill="#3366cc"/>
<path d="M2334 909H3186.3" stroke="#72777c" stroke-width="2.2"/>
<path d="M2468.6 909v10.5" stroke="#72777c" stroke-width="2.2"/>
<path d="M2610.2 909v10.5" stroke="#72777c" stroke-width="2.2"/>
<path d="M2751.9 909v10.5" stroke="#72777c" stroke-width="2.2"/>
<path d="M2893.5 909v10.5" stroke="#72777c" stroke-width="2.2"/>
<path d="M3035.2 909v10.5" stroke="#72777c" stroke-width="2.2"/>
<path d="M3176.8 909v10.5" stroke="#72777c" stroke-width="2.2"/>
</svg>
<span class="t" style="left:2431.04px;top:920.4px;font-size:20.5px;line-height:25px;color:#3c4043;transform:scaleX(0.9874);">3:50 PM</span>
<span class="t" style="left:2572.94px;top:920.4px;font-size:20.5px;line-height:25px;color:#3c4043;transform:scaleX(0.9840);">4:00 PM</span>
<span class="t" style="left:2714.58px;top:920.4px;font-size:20.5px;line-height:25px;color:#3c4043;transform:scaleX(0.9840);">4:10 PM</span>
<span class="t" style="left:2856.22px;top:920.4px;font-size:20.5px;line-height:25px;color:#3c4043;transform:scaleX(0.9840);">4:20 PM</span>
<span class="t" style="left:2997.86px;top:920.4px;font-size:20.5px;line-height:25px;color:#3c4043;transform:scaleX(0.9840);">4:30 PM</span>
<span class="t" style="left:3139.50px;top:920.4px;font-size:20.5px;line-height:25px;color:#3c4043;transform:scaleX(0.9840);">4:40 PM</span>
<span class="t" style="left:3199.80px;top:474.1px;font-size:20.5px;line-height:25px;color:#3c4043;">80ms</span>
<span class="t" style="left:3199.80px;top:579.1px;font-size:20.5px;line-height:25px;color:#3c4043;">60ms</span>
<span class="t" style="left:3199.80px;top:684.2px;font-size:20.5px;line-height:25px;color:#3c4043;">40ms</span>
<span class="t" style="left:3199.80px;top:789.2px;font-size:20.5px;line-height:25px;color:#3c4043;">20ms</span>
<span class="t" style="left:3199.80px;top:894.3px;font-size:20.5px;line-height:25px;color:#3c4043;">0</span>
<div class="card" style="left:176px;top:1040px;width:1018px;height:673px"></div>
<span class="t" style="left:231.77px;top:1084.8px;font-size:30.75px;line-height:37px;color:#111;-webkit-text-stroke:0.35px #111;transform:scaleX(0.9398);">Error Rate per Region</span>
<svg class="i" style="left:1124.0px;top:1088.0px" width="12" height="32" viewBox="0 0 12 32"><circle cx="6" cy="4" r="4.100" fill="#6e6e6e"/><circle cx="6" cy="16" r="4.100" fill="#6e6e6e"/><circle cx="6" cy="28" r="4.100" fill="#6e6e6e"/></svg>
<div class="chip" style="left:200px;top:1152px;width:110px;height:48px"></div>
<svg class="i" style="left:223.7px;top:1153.9px" width="44.2" height="44.2" viewBox="0 0 24 24"><path d="M10 18h4v-2h-4v2zM3 6v2h18V6H3zm3 7h12v-2H6v2z" fill="#111" /></svg>
<span class="t" style="left:271.77px;top:1161.3px;font-size:24.6px;line-height:30px;color:#111;-webkit-text-stroke:0.25px #111;">2</span>
<div class="chip" style="left:326.0px;top:1156.0px;width:233.7px;height:40.0px"></div>
<span class="t" style="left:349.30px;top:1160.8px;font-size:24.6px;line-height:30px;color:#111;-webkit-text-stroke:0.25px #111;transform:scaleX(0.9998);">by location (sum)</span>
<div class="chip" style="left:575.8px;top:1156.0px;width:266.2px;height:40.0px"></div>
<span class="t" style="left:598.89px;top:1160.8px;font-size:24.6px;line-height:30px;color:#111;-webkit-text-stroke:0.25px #111;transform:scaleX(0.9810);">10 sec interval (rate)</span>
<svg class="i" style="left:0;top:0" width="3358" height="1738" viewBox="0 0 3358 1738">
<defs><clipPath id="cp4"><rect x="220.4" y="1215.1" width="881.6" height="429.9000000000001"/></clipPath></defs>
<path d="M220.4 1221.1H1072" stroke="#e6e6e6" stroke-width="2"/>
<path d="M220.4 1305.08H1072" stroke="#e6e6e6" stroke-width="2"/>
<path d="M220.4 1389.06H1072" stroke="#e6e6e6" stroke-width="2"/>
<path d="M220.4 1473.04H1072" stroke="#e6e6e6" stroke-width="2"/>
<path d="M220.4 1557.02H1072" stroke="#e6e6e6" stroke-width="2"/>
<polyline clip-path="url(#cp4)" points="220.0,1473.0 227.3,1473.0 234.2,1459.0 241.5,1459.0 248.4,1403.1 255.7,1403.1 262.5,1459.0 269.8,1459.0 276.7,1473.0 284.0,1473.0 290.8,1403.1 298.1,1403.1 305.0,1389.1 312.3,1389.1 319.2,1487.0 326.5,1487.0 333.3,1445.0 340.6,1445.0 347.5,1333.1 354.8,1333.1 361.7,1431.0 369.0,1431.0 375.8,1417.0 383.1,1417.0 390.0,1529.0 397.3,1529.0 404.2,1387.1 411.5,1387.1 418.3,1445.0 425.6,1445.0 432.5,1403.1 439.8,1403.1 446.6,1501.0 453.9,1501.0 460.8,1431.0 468.1,1431.0 475.0,1445.0 482.3,1445.0 489.1,1387.1 496.4,1387.1 503.3,1543.0 510.6,1543.0 517.5,1361.1 524.8,1361.1 531.6,1431.0 538.9,1431.0 545.8,1403.1 553.1,1403.1 560.0,1515.0 567.3,1515.0 574.1,1431.0 581.4,1431.0 588.3,1375.1 595.6,1375.1 602.5,1431.0 609.8,1431.0 616.6,1529.0 623.9,1529.0 630.8,1403.1 638.1,1403.1 644.9,1417.0 652.2,1417.0 659.1,1417.0 666.4,1417.0 673.3,1515.0 680.6,1515.0 687.4,1389.1 694.7,1389.1 701.6,1459.0 708.9,1459.0 715.8,1361.1 723.1,1361.1 729.9,1557.0 737.2,1557.0 744.1,1389.1 751.4,1389.1 758.3,1389.1 765.6,1389.1 772.4,1403.1 779.7,1403.1 786.6,1459.0 793.9,1459.0 800.7,1389.1 808.0,1389.1 814.9,1417.0 822.2,1417.0 829.1,1445.0 836.4,1445.0 843.2,1487.0 850.5,1487.0 857.4,1347.1 864.7,1347.1 871.6,1487.0 878.9,1487.0 885.7,1417.0 893.0,1417.0 899.9,1487.0 907.2,1487.0 914.1,1445.0 921.4,1445.0 928.2,1403.1 935.5,1403.1 942.4,1403.1 949.7,1403.1 956.6,1515.0 963.9,1515.0 970.7,1361.1 978.0,1361.1 984.9,1305.1 992.2,1305.1 999.0,1333.1 1006.3,1333.1 1013.2,1431.0 1020.5,1431.0 1027.4,1305.1 1034.7,1305.1 1041.5,1319.1 1048.8,1319.1 1055.7,1291.1 1063.0,1291.1" fill="none" stroke="#3366cc" stroke-width="2.4" stroke-linejoin="miter"/>
<circle cx="1063" cy="1291.1" r="9.5" fill="#fff"/><circle cx="1063" cy="1291.1" r="7.800" fill="#3366cc"/>
<path d="M220.4 1641H1072" stroke="#72777c" stroke-width="2.2"/>
<path d="M354.8 1641v10.5" stroke="#72777c" stroke-width="2.2"/>
<path d="M496.4 1641v10.5" stroke="#72777c" stroke-width="2.2"/>
<path d="M638.1 1641v10.5" stroke="#72777c" stroke-width="2.2"/>
<path d="M779.7 1641v10.5" stroke="#72777c" stroke-width="2.2"/>
<path d="M921.4 1641v10.5" stroke="#72777c" stroke-width="2.2"/>
<path d="M1063.0 1641v10.5" stroke="#72777c" stroke-width="2.2"/>
</svg>
<span class="t" style="left:317.24px;top:1652.4px;font-size:20.5px;line-height:25px;color:#3c4043;transform:scaleX(0.9874);">3:50 PM</span>
<span class="t" style="left:459.14px;top:1652.4px;font-size:20.5px;line-height:25px;color:#3c4043;transform:scaleX(0.9840);">4:00 PM</span>
<span class="t" style="left:600.78px;top:1652.4px;font-size:20.5px;line-height:25px;color:#3c4043;transform:scaleX(0.9840);">4:10 PM</span>
<span class="t" style="left:742.42px;top:1652.4px;font-size:20.5px;line-height:25px;color:#3c4043;transform:scaleX(0.9840);">4:20 PM</span>
<span class="t" style="left:884.06px;top:1652.4px;font-size:20.5px;line-height:25px;color:#3c4043;transform:scaleX(0.9840);">4:30 PM</span>
<span class="t" style="left:1025.70px;top:1652.4px;font-size:20.5px;line-height:25px;color:#3c4043;transform:scaleX(0.9840);">4:40 PM</span>
<span class="t" style="left:1085.60px;top:1206.4px;font-size:20.5px;line-height:25px;color:#3c4043;">0.9s</span>
<span class="t" style="left:1085.60px;top:1290.4px;font-size:20.5px;line-height:25px;color:#3c4043;">0.8s</span>
<span class="t" style="left:1085.60px;top:1374.4px;font-size:20.5px;line-height:25px;color:#3c4043;">0.7s</span>
<span class="t" style="left:1085.60px;top:1458.3px;font-size:20.5px;line-height:25px;color:#3c4043;">0.6s</span>
<span class="t" style="left:1085.60px;top:1542.3px;font-size:20.5px;line-height:25px;color:#3c4043;">0.5s</span>
<span class="t" style="left:1085.60px;top:1626.3px;font-size:20.5px;line-height:25px;color:#3c4043;">0.4s</span>
<div class="card" style="left:1246px;top:1040px;width:992px;height:665px"></div>
<span class="t" style="left:1302.72px;top:1084.8px;font-size:30.75px;line-height:37px;color:#111;-webkit-text-stroke:0.35px #111;transform:scaleX(0.9253);">QPS per Region</span>
<svg class="i" style="left:2167.5px;top:1088.0px" width="12" height="32" viewBox="0 0 12 32"><circle cx="6" cy="4" r="4.100" fill="#6e6e6e"/><circle cx="6" cy="16" r="4.100" fill="#6e6e6e"/><circle cx="6" cy="28" r="4.100" fill="#6e6e6e"/></svg>
<div class="chip" style="left:1270.0px;top:1151.6px;width:232.0px;height:40.4px"></div>
<span class="t" style="left:1293.32px;top:1156.8px;font-size:24.6px;line-height:30px;color:#111;-webkit-text-stroke:0.25px #111;transform:scaleX(0.9906);">by location (sum)</span>
<div class="chip" style="left:1518.0px;top:1151.6px;width:268.0px;height:40.4px"></div>
<span class="t" style="left:1541.07px;top:1156.8px;font-size:24.6px;line-height:30px;color:#111;-webkit-text-stroke:0.25px #111;transform:scaleX(0.9892);">10 sec interval (rate)</span>
<svg class="i" style="left:0;top:0" width="3358" height="1738" viewBox="0 0 3358 1738">
<defs><clipPath id="cp5"><rect x="1290.9" y="1206.8" width="856.0999999999999" height="430.20000000000005"/></clipPath></defs>
<path d="M1290.9 1212.8H2117" stroke="#e6e6e6" stroke-width="2"/>
<path d="M1290.9 1422.9H2117" stroke="#e6e6e6" stroke-width="2"/>
<polyline clip-path="url(#cp5)" points="1289.5,1591.0 1296.8,1591.0 1303.3,1583.9 1310.6,1583.9 1317.0,1555.9 1324.3,1555.9 1330.8,1583.9 1338.1,1583.9 1344.6,1591.0 1351.9,1591.0 1358.3,1555.9 1365.6,1555.9 1372.1,1548.9 1379.4,1548.9 1385.9,1598.0 1393.2,1598.0 1399.6,1576.9 1406.9,1576.9 1413.4,1520.9 1420.7,1520.9 1427.2,1569.9 1434.5,1569.9 1440.9,1562.9 1448.2,1562.9 1454.7,1619.0 1462.0,1619.0 1468.5,1548.9 1475.8,1548.9 1482.2,1576.9 1489.5,1576.9 1496.0,1555.9 1503.3,1555.9 1509.8,1605.0 1517.1,1605.0 1523.5,1569.9 1530.8,1569.9 1537.3,1576.9 1544.6,1576.9 1551.1,1548.9 1558.4,1548.9 1564.8,1626.0 1572.1,1626.0 1578.6,1534.9 1585.9,1534.9 1592.4,1569.9 1599.7,1569.9 1606.1,1555.9 1613.4,1555.9 1619.9,1612.0 1627.2,1612.0 1633.7,1569.9 1641.0,1569.9 1647.4,1541.9 1654.7,1541.9 1661.2,1569.9 1668.5,1569.9 1675.0,1619.0 1682.3,1619.0 1688.7,1555.9 1696.0,1555.9 1702.5,1562.9 1709.8,1562.9 1716.3,1562.9 1723.6,1562.9 1730.0,1612.0 1737.3,1612.0 1743.8,1548.9 1751.1,1548.9 1757.6,1583.9 1764.9,1583.9 1771.3,1534.9 1778.6,1534.9 1785.1,1633.0 1792.4,1633.0 1798.8,1548.9 1806.1,1548.9 1812.6,1548.9 1819.9,1548.9 1826.4,1555.9 1833.7,1555.9 1840.1,1583.9 1847.4,1583.9 1853.9,1548.9 1861.2,1548.9 1867.7,1562.9 1875.0,1562.9 1881.4,1576.9 1888.7,1576.9 1895.2,1562.9 1902.5,1562.9 1909.0,1492.8 1916.3,1492.8 1922.7,1598.0 1930.0,1598.0 1936.5,1562.9 1943.8,1562.9 1950.3,1598.0 1957.6,1598.0 1964.0,1576.9 1971.3,1576.9 1977.8,1555.9 1985.1,1555.9 1991.6,1555.9 1998.9,1555.9 2005.3,1612.0 2012.6,1612.0 2019.1,1436.8 2026.4,1436.8 2032.9,1268.6 2040.2,1268.6 2046.6,1331.7 2053.9,1331.7 2060.4,1359.7 2067.7,1359.7 2074.2,1296.6 2081.5,1296.6 2087.9,1303.6 2095.2,1303.6 2101.7,1289.6 2109.0,1289.6" fill="none" stroke="#3366cc" stroke-width="2.4" stroke-linejoin="miter"/>
<circle cx="2109" cy="1289.6" r="9.5" fill="#fff"/><circle cx="2109" cy="1289.6" r="7.800" fill="#3366cc"/>
<path d="M1290.9 1633H2117" stroke="#72777c" stroke-width="2.2"/>
<path d="M1420.7 1633v10.5" stroke="#72777c" stroke-width="2.2"/>
<path d="M1558.4 1633v10.5" stroke="#72777c" stroke-width="2.2"/>
<path d="M1696.0 1633v10.5" stroke="#72777c" stroke-width="2.2"/>
<path d="M1833.7 1633v10.5" stroke="#72777c" stroke-width="2.2"/>
<path d="M1971.3 1633v10.5" stroke="#72777c" stroke-width="2.2"/>
<path d="M2109.0 1633v10.5" stroke="#72777c" stroke-width="2.2"/>
</svg>
<span class="t" style="left:1383.14px;top:1644.4px;font-size:20.5px;line-height:25px;color:#3c4043;transform:scaleX(0.9874);">3:50 PM</span>
<span class="t" style="left:1521.06px;top:1644.4px;font-size:20.5px;line-height:25px;color:#3c4043;transform:scaleX(0.9840);">4:00 PM</span>
<span class="t" style="left:1658.72px;top:1644.4px;font-size:20.5px;line-height:25px;color:#3c4043;transform:scaleX(0.9840);">4:10 PM</span>
<span class="t" style="left:1796.38px;top:1644.4px;font-size:20.5px;line-height:25px;color:#3c4043;transform:scaleX(0.9840);">4:20 PM</span>
<span class="t" style="left:1934.04px;top:1644.4px;font-size:20.5px;line-height:25px;color:#3c4043;transform:scaleX(0.9840);">4:30 PM</span>
<span class="t" style="left:2071.70px;top:1644.4px;font-size:20.5px;line-height:25px;color:#3c4043;transform:scaleX(0.9840);">4:40 PM</span>
<span class="t" style="left:2131.70px;top:1198.1px;font-size:20.5px;line-height:25px;color:#3c4043;">1.5s</span>
<span class="t" style="left:2131.70px;top:1408.2px;font-size:20.5px;line-height:25px;color:#3c4043;">1s</span>
<span class="t" style="left:2131.70px;top:1618.3px;font-size:20.5px;line-height:25px;color:#3c4043;">0.5s</span>
<div class="card" style="left:2290px;top:1040px;width:1018px;height:665px"></div>
<span class="t" style="left:2347.17px;top:1084.8px;font-size:30.75px;line-height:37px;color:#111;-webkit-text-stroke:0.35px #111;transform:scaleX(0.9625);">99th Percentile Latency per Region</span>
<svg class="i" style="left:3238.0px;top:1088.0px" width="12" height="32" viewBox="0 0 12 32"><circle cx="6" cy="4" r="4.100" fill="#6e6e6e"/><circle cx="6" cy="16" r="4.100" fill="#6e6e6e"/><circle cx="6" cy="28" r="4.100" fill="#6e6e6e"/></svg>
<div class="chip" style="left:2314.2px;top:1151.6px;width:345.2px;height:40.4px"></div>
<span class="t" style="left:2337.52px;top:1156.8px;font-size:24.6px;line-height:30px;color:#111;-webkit-text-stroke:0.25px #111;transform:scaleX(0.9886);">by location (99th percentile)</span>
<div class="chip" style="left:2675.6px;top:1151.6px;width:278.4px;height:40.4px"></div>
<span class="t" style="left:2698.68px;top:1156.8px;font-size:24.6px;line-height:30px;color:#111;-webkit-text-stroke:0.25px #111;transform:scaleX(0.9873);">10 sec interval (delta)</span>
<svg class="i" style="left:0;top:0" width="3358" height="1738" viewBox="0 0 3358 1738">
<defs><clipPath id="cp6"><rect x="2334" y="1206.8" width="882.3000000000002" height="430.20000000000005"/></clipPath></defs>
<path d="M2334 1212.8H3186.3" stroke="#e6e6e6" stroke-width="2"/>
<path d="M2334 1352.87H3186.3" stroke="#e6e6e6" stroke-width="2"/>
<path d="M2334 1492.93H3186.3" stroke="#e6e6e6" stroke-width="2"/>
<polyline clip-path="url(#cp6)" points="2333.8,1576.9 2341.1,1576.9 2348.0,1539.1 2355.3,1539.1 2362.2,1531.4 2369.5,1531.4 2376.3,1446.6 2383.6,1446.6 2390.5,1539.1 2397.8,1539.1 2404.6,1526.5 2411.9,1526.5 2418.8,1433.3 2426.1,1433.3 2433.0,1446.6 2440.3,1446.6 2447.1,1576.9 2454.4,1576.9 2461.3,1544.7 2468.6,1544.7 2475.5,1452.2 2482.8,1452.2 2489.6,1540.5 2496.9,1540.5 2503.8,1576.9 2511.1,1576.9 2518.0,1450.1 2525.3,1450.1 2532.1,1455.0 2539.4,1455.0 2546.3,1450.1 2553.6,1450.1 2560.4,1576.9 2567.7,1576.9 2574.6,1532.8 2581.9,1532.8 2588.8,1530.7 2596.1,1530.7 2602.9,1526.5 2610.2,1526.5 2617.1,1539.1 2624.4,1539.1 2631.3,1422.8 2638.6,1422.8 2645.4,1274.2 2652.7,1274.2 2659.6,1455.0 2666.9,1455.0 2673.8,1576.9 2681.1,1576.9 2687.9,1274.2 2695.2,1274.2 2702.1,1433.3 2709.4,1433.3 2716.3,1528.6 2723.6,1528.6 2730.4,1576.9 2737.7,1576.9 2744.6,1448.7 2751.9,1448.7 2758.7,1286.1 2766.0,1286.1 2772.9,1528.6 2780.2,1528.6 2787.1,1576.9 2794.4,1576.9 2801.2,1457.1 2808.5,1457.1 2815.4,1531.4 2822.7,1531.4 2829.6,1526.5 2836.9,1526.5 2843.7,1576.9 2851.0,1576.9 2857.9,1525.1 2865.2,1525.1 2872.1,1433.3 2879.4,1433.3 2886.2,1450.8 2893.5,1450.8 2900.4,1540.5 2907.7,1540.5 2914.5,1431.2 2921.8,1431.2 2928.7,1526.5 2936.0,1526.5 2942.9,1530.7 2950.2,1530.7 2957.0,1576.9 2964.3,1576.9 2971.2,1460.6 2978.5,1460.6 2985.4,1540.5 2992.7,1540.5 2999.5,1530.7 3006.8,1530.7 3013.7,1576.9 3021.0,1576.9 3027.9,1422.8 3035.2,1422.8 3042.0,1530.7 3049.3,1530.7 3056.2,1530.7 3063.5,1530.7 3070.4,1539.1 3077.7,1539.1 3084.5,1528.6 3091.8,1528.6 3098.7,1448.7 3106.0,1448.7 3112.8,1540.5 3120.1,1540.5 3127.0,1558.7 3134.3,1558.7 3141.2,1494.9 3148.5,1494.9 3155.3,1490.7 3162.6,1490.7 3169.5,1497.0 3176.8,1497.0" fill="none" stroke="#3366cc" stroke-width="3.4" stroke-linejoin="miter"/>
<circle cx="3176.8" cy="1497.0" r="9.5" fill="#fff"/><circle cx="3176.8" cy="1497.0" r="7.800" fill="#3366cc"/>
<path d="M2334 1633H3186.3" stroke="#72777c" stroke-width="2.2"/>
<path d="M2468.6 1633v10.5" stroke="#72777c" stroke-width="2.2"/>
<path d="M2610.2 1633v10.5" stroke="#72777c" stroke-width="2.2"/>
<path d="M2751.9 1633v10.5" stroke="#72777c" stroke-width="2.2"/>
<path d="M2893.5 1633v10.5" stroke="#72777c" stroke-width="2.2"/>
<path d="M3035.2 1633v10.5" stroke="#72777c" stroke-width="2.2"/>
<path d="M3176.8 1633v10.5" stroke="#72777c" stroke-width="2.2"/>
</svg>
<span class="t" style="left:2431.04px;top:1644.4px;font-size:20.5px;line-height:25px;color:#3c4043;transform:scaleX(0.9874);">3:50 PM</span>
<span class="t" style="left:2572.94px;top:1644.4px;font-size:20.5px;line-height:25px;color:#3c4043;transform:scaleX(0.9840);">4:00 PM</span>
<span class="t" style="left:2714.58px;top:1644.4px;font-size:20.5px;line-height:25px;color:#3c4043;transform:scaleX(0.9840);">4:10 PM</span>
<span class="t" style="left:2856.22px;top:1644.4px;font-size:20.5px;line-height:25px;color:#3c4043;transform:scaleX(0.9840);">4:20 PM</span>
<span class="t" style="left:2997.86px;top:1644.4px;font-size:20.5px;line-height:25px;color:#3c4043;transform:scaleX(0.9840);">4:30 PM</span>
<span class="t" style="left:3139.50px;top:1644.4px;font-size:20.5px;line-height:25px;color:#3c4043;transform:scaleX(0.9840);">4:40 PM</span>
<span class="t" style="left:3199.80px;top:1198.1px;font-size:20.5px;line-height:25px;color:#3c4043;">60ms</span>
<span class="t" style="left:3199.80px;top:1338.2px;font-size:20.5px;line-height:25px;color:#3c4043;">40ms</span>
<span class="t" style="left:3199.80px;top:1478.2px;font-size:20.5px;line-height:25px;color:#3c4043;">20ms</span>
<span class="t" style="left:3199.80px;top:1618.3px;font-size:20.5px;line-height:25px;color:#3c4043;">0</span>
</body></html>
